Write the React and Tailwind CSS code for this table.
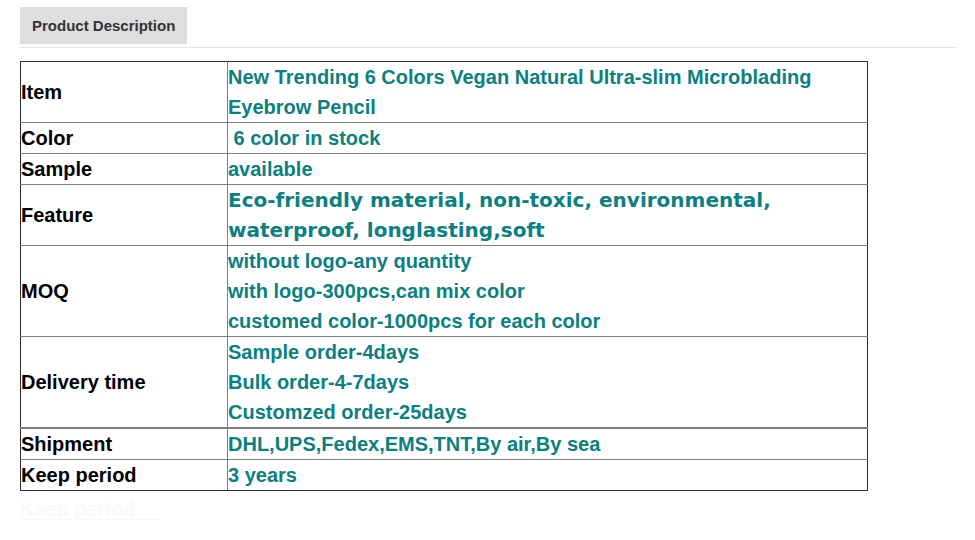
export default function App() {
  const lab = "border border-[#808080] border-l-[#2b2b2b] align-middle p-0 text-[20px] font-bold text-black leading-[30px]";
  const val = "border border-[#808080] border-r-[#2b2b2b] align-middle p-0 text-[20px] font-bold text-[#0b8080] leading-[30px]";
  return (
    <div className="w-[975px] h-[540px] bg-white pt-[7px] pl-[20px] pr-[18px] font-['Liberation_Sans',Arial,sans-serif]">
      <div className="border-b border-[#e5e5e5] pb-[3px]">
        <div className="inline-block bg-[#dedede] h-[37px] px-[12px] leading-[37px] text-[15px] font-bold text-[#333]">
          Product Description
        </div>
      </div>
      <table className="mt-[13px] w-[848px] border-collapse table-fixed">
        <colgroup>
          <col className="w-[207px]" />
          <col />
        </colgroup>
        <tbody>
          <tr>
            <td className={lab + " border-t-[#2b2b2b]"}>Item</td>
            <td className={val + " border-t-[#2b2b2b]"}>New Trending 6 Colors Vegan Natural Ultra-slim Microblading Eyebrow Pencil</td>
          </tr>
          <tr>
            <td className={lab}>Color</td>
            <td className={val + " whitespace-pre"}> 6 color in stock</td>
          </tr>
          <tr>
            <td className={lab}>Sample</td>
            <td className={val}>available</td>
          </tr>
          <tr>
            <td className={lab}>Feature</td>
            <td className={val + " font-['DejaVu_Sans',Verdana,sans-serif] text-[18.5px]"}>
              Eco-friendly material, non-toxic, environmental,<br />waterproof, longlasting,soft
            </td>
          </tr>
          <tr>
            <td className={lab}>MOQ</td>
            <td className={val}>
              without logo-any quantity<br />with logo-300pcs,can mix color<br />customed color-1000pcs for each color
            </td>
          </tr>
          <tr>
            <td className={lab}>Delivery time</td>
            <td className={val}>
              Sample order-4days<br />Bulk order-4-7days<br />Customzed order-25days
            </td>
          </tr>
          <tr>
            <td className={lab + " border-t-2"}>Shipment</td>
            <td className={val + " border-t-2"}>DHL,UPS,Fedex,EMS,TNT,By air,By sea</td>
          </tr>
          <tr>
            <td className={lab + " border-b-[#2b2b2b]"}>Keep period</td>
            <td className={val + " border-b-[#2b2b2b]"}>3 years</td>
          </tr>
        </tbody>
      </table>
      <div className="mt-[8px] w-[140px] text-[20px] font-bold leading-[20px] text-[#f9f9f9] border-b border-[#f7f7f7]">Keep period</div>
    </div>
  );
}
